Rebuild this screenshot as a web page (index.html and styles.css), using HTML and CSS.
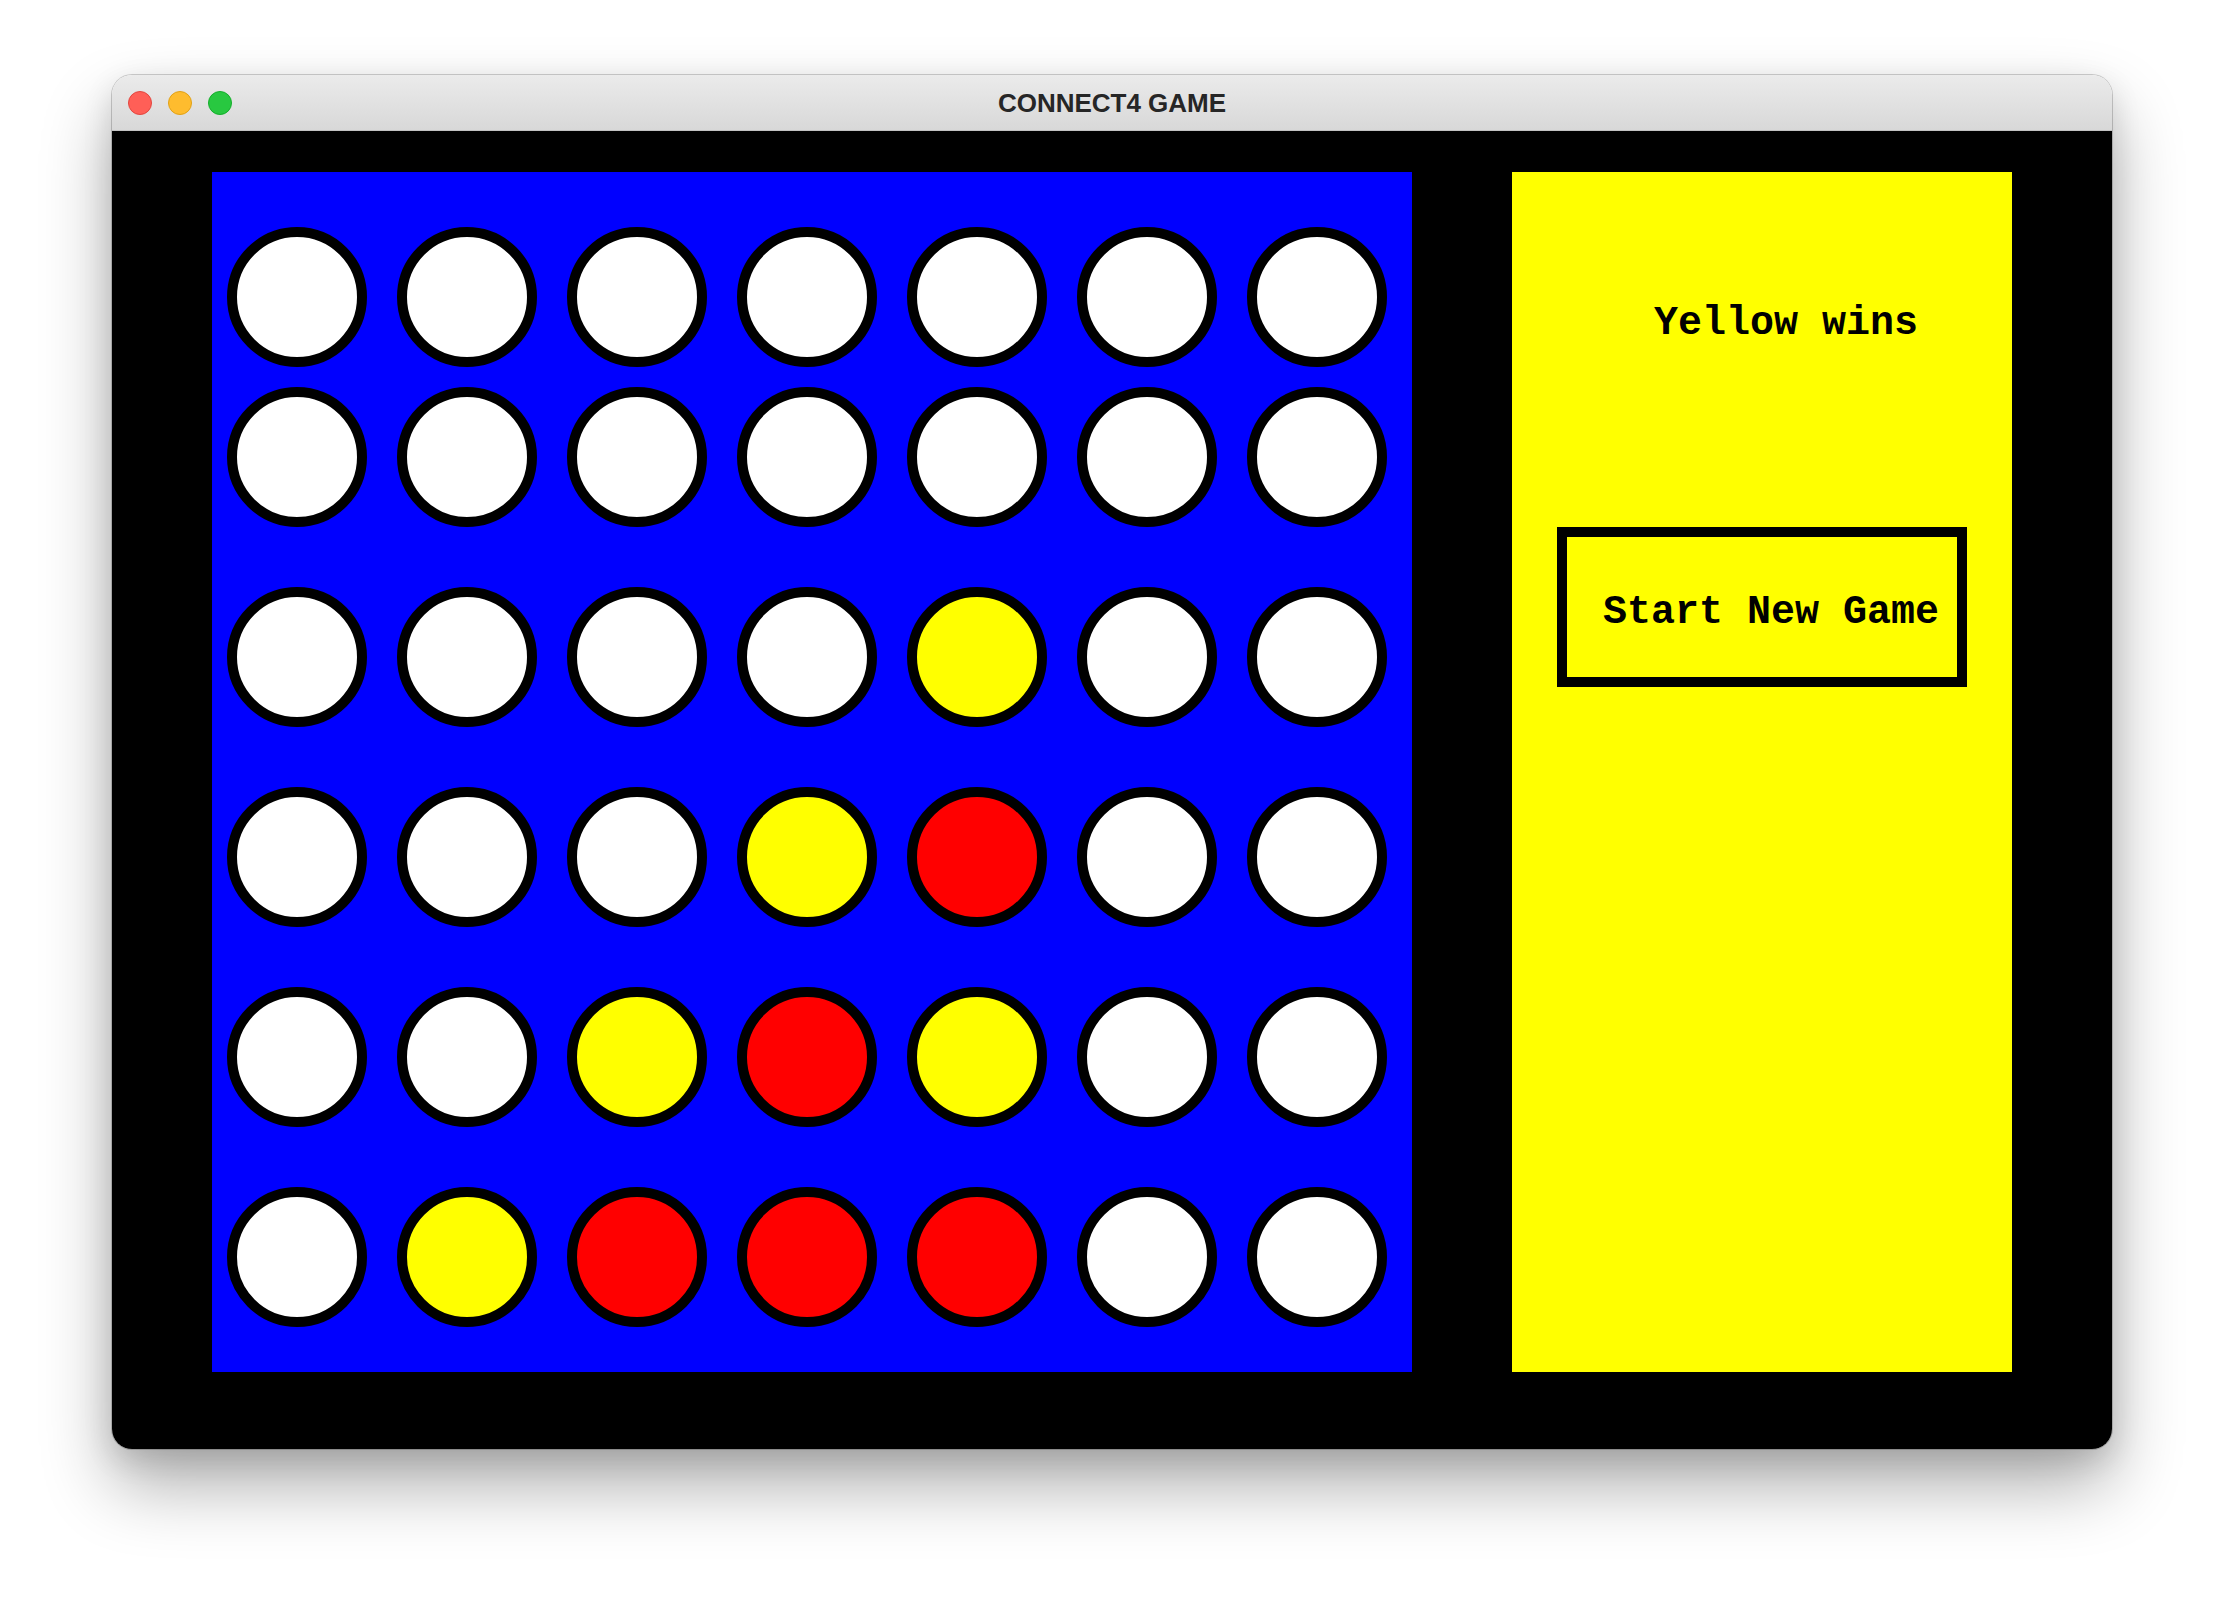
FILE: index.html
```html
<!DOCTYPE html>
<html>
<head>
<meta charset="utf-8">
<title>CONNECT4 GAME</title>
<link rel="stylesheet" href="styles.css">
</head>
<body>
<div class="window">
  <div class="titlebar">
    <div class="lights">
      <span class="light red"></span>
      <span class="light amber"></span>
      <span class="light green"></span>
    </div>
    <div class="title">CONNECT4 GAME</div>
  </div>
  <div class="content">
    <div class="board">
      <div class="row">
        <span class="cell"></span><span class="cell"></span><span class="cell"></span><span class="cell"></span><span class="cell"></span><span class="cell"></span><span class="cell"></span>
      </div>
      <div class="row">
        <span class="cell"></span><span class="cell"></span><span class="cell"></span><span class="cell"></span><span class="cell"></span><span class="cell"></span><span class="cell"></span>
      </div>
      <div class="row">
        <span class="cell"></span><span class="cell"></span><span class="cell"></span><span class="cell"></span><span class="cell yellow"></span><span class="cell"></span><span class="cell"></span>
      </div>
      <div class="row">
        <span class="cell"></span><span class="cell"></span><span class="cell"></span><span class="cell yellow"></span><span class="cell red"></span><span class="cell"></span><span class="cell"></span>
      </div>
      <div class="row">
        <span class="cell"></span><span class="cell"></span><span class="cell yellow"></span><span class="cell red"></span><span class="cell yellow"></span><span class="cell"></span><span class="cell"></span>
      </div>
      <div class="row">
        <span class="cell"></span><span class="cell yellow"></span><span class="cell red"></span><span class="cell red"></span><span class="cell red"></span><span class="cell"></span><span class="cell"></span>
      </div>
    </div>
    <div class="panel">
      <div class="status">Yellow wins</div>
      <div class="button">Start New Game</div>
    </div>
  </div>
</div>
</body>
</html>
```

FILE: styles.css
```css
html, body {
  margin: 0;
  padding: 0;
  background: #ffffff;
}

body {
  padding: 75px 0 0 112px;
  height: 1598px;
  box-sizing: border-box;
  overflow: hidden;
}

.window {
  width: 2000px;
  border-radius: 20px;
  overflow: hidden;
  box-shadow: 0 0 0 1px rgba(0, 0, 0, 0.18), 0 36px 70px rgba(0, 0, 0, 0.32), 0 10px 30px rgba(0, 0, 0, 0.12);
}

.titlebar {
  height: 55px;
  border-bottom: 1px solid #c2c2c2;
  background: linear-gradient(#ebebeb, #d8d8d8);
  display: flex;
  align-items: center;
  position: relative;
}

.lights {
  display: flex;
  gap: 16px;
  padding-left: 16px;
}

.light {
  width: 24px;
  height: 24px;
  border-radius: 50%;
  box-sizing: border-box;
}

.light.red {
  background: #ff5f57;
  border: 1px solid #e2463f;
}

.light.amber {
  background: #febc2e;
  border: 1px solid #e1a116;
}

.light.green {
  background: #28c840;
  border: 1px solid #14ae2b;
}

.title {
  position: absolute;
  left: 0;
  right: 0;
  top: 0;
  bottom: 0;
  display: flex;
  align-items: center;
  justify-content: center;
  font-family: "Liberation Sans", Arial, sans-serif;
  font-weight: bold;
  font-size: 26px;
  color: #262626;
  padding-top: 1px;
}

.content {
  background: #000000;
  height: 1318px;
  box-sizing: border-box;
  padding: 41px 100px 77px 100px;
  display: flex;
  gap: 100px;
}

.board {
  width: 1200px;
  height: 1200px;
  box-sizing: border-box;
  background: #0000ff;
  padding: 55px 25px 45px 15px;
  display: flex;
  flex-direction: column;
}

.row {
  display: flex;
  gap: 30px;
  margin-top: 60px;
}

.row:first-child {
  margin-top: 0;
}

.row:nth-child(2) {
  margin-top: 20px;
}

.cell {
  width: 140px;
  height: 140px;
  box-sizing: border-box;
  border: 10px solid #000000;
  border-radius: 50%;
  background: #ffffff;
}

.cell.yellow {
  background: #ffff00;
}

.cell.red {
  background: #ff0000;
}

.panel {
  width: 500px;
  height: 1200px;
  background: #ffff00;
  box-sizing: border-box;
  display: flex;
  flex-direction: column;
  font-family: "Nimbus Mono PS", "Courier New", "Liberation Mono", monospace;
  font-weight: bold;
  font-size: 40px;
  color: #000000;
}

.status {
  line-height: 40px;
  padding: 132px 0 0 142px;
}

.button {
  margin: 183px 0 0 45px;
  width: 410px;
  height: 160px;
  box-sizing: border-box;
  border: 10px solid #000000;
  display: flex;
  align-items: center;
  padding: 12px 0 0 36px;
  line-height: 40px;
}
```
